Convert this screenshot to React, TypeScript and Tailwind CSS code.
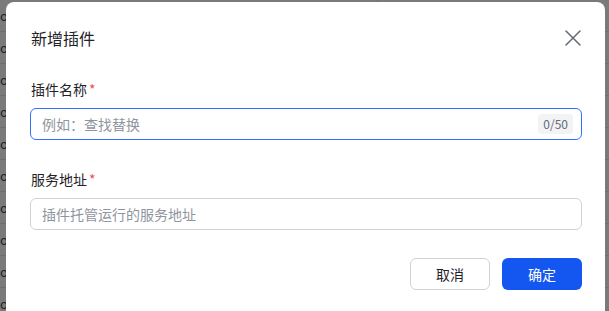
import React from "react";

const font = { fontFamily: '"Noto Sans CJK SC", "Noto Sans", sans-serif' };

function Backdrop() {
  const rows = Array.from({ length: 10 });
  return (
    <div className="absolute inset-0 bg-[#7a7a7a] overflow-hidden">
      {rows.map((_, i) => (
        <div
          key={i}
          className="h-[32px] border-b border-[#6e6e6e] flex items-center text-[13px] text-[#222] leading-none"
        >
          <span className="w-[68px]">o.</span>
          {i === 0 && (
            <>
              <span className="border-l border-[#6e6e6e] pl-2 w-[155px] text-[#3a3a3a]">2023/10/23</span>
              <span className="border-l border-[#6e6e6e] pl-2 w-[154px] text-[#3a3a3a]">替TX</span>
              <span className="border-l border-[#6e6e6e] h-full"></span>
            </>
          )}
        </div>
      ))}
    </div>
  );
}

function Label({ text }: { text: string }) {
  return (
    <div className="text-[14px] leading-[22px] text-[#1f2329] flex items-center">
      {text}
      <span className="text-[#f54a45] ml-[2px]">*</span>
    </div>
  );
}

export default function App() {
  return (
    <div className="relative w-[609px] h-[311px] overflow-hidden" style={font}>
      <Backdrop />
      <div className="absolute left-[6px] top-[2px] w-[599px] h-[340px] bg-white rounded-[8px] pt-[24px] px-[24px]">
        <div className="flex items-center justify-between h-[24px]">
          <h2 className="text-[16px] leading-[24px] text-[#1f2329] pl-px">新增插件</h2>
          <button className="w-[24px] h-[24px] flex items-center justify-center text-[#646a73] -mr-[4px]">
            <svg width="16" height="16" viewBox="0 0 16 16" fill="none">
              <path d="M1 1L15 15M15 1L1 15" stroke="currentColor" strokeWidth="1.5" strokeLinecap="round" />
            </svg>
          </button>
        </div>

        <div className="mt-[28px] pl-px">
          <Label text="插件名称" />
        </div>
        <div className="mt-[8px] h-[32px] w-[552px] border border-[#3370ff] rounded-[6px] flex items-center pl-[11px] pr-[8px]">
          <span className="flex-1 text-[14px] text-[#8f959e]">例如：查找替换</span>
          <span className="h-[20px] px-[5px] rounded-[4px] bg-[#f2f3f5] text-[12px] leading-[20px] text-[#646a73]">0/50</span>
        </div>

        <div className="mt-[28px] pl-px">
          <Label text="服务地址" />
        </div>
        <div className="mt-[8px] h-[32px] w-[552px] border border-[#d0d3d6] rounded-[6px] flex items-center pl-[11px]">
          <span className="text-[14px] text-[#8f959e]">插件托管运行的服务地址</span>
        </div>

        <div className="mt-[28px] w-[552px] flex justify-end gap-[12px]">
          <button className="w-[80px] h-[32px] border border-[#d0d3d6] rounded-[6px] text-[14px] text-[#1f2329] bg-white">
            取消
          </button>
          <button className="w-[80px] h-[32px] rounded-[6px] text-[14px] text-white bg-[#1456f0]">
            确定
          </button>
        </div>
      </div>
    </div>
  );
}
